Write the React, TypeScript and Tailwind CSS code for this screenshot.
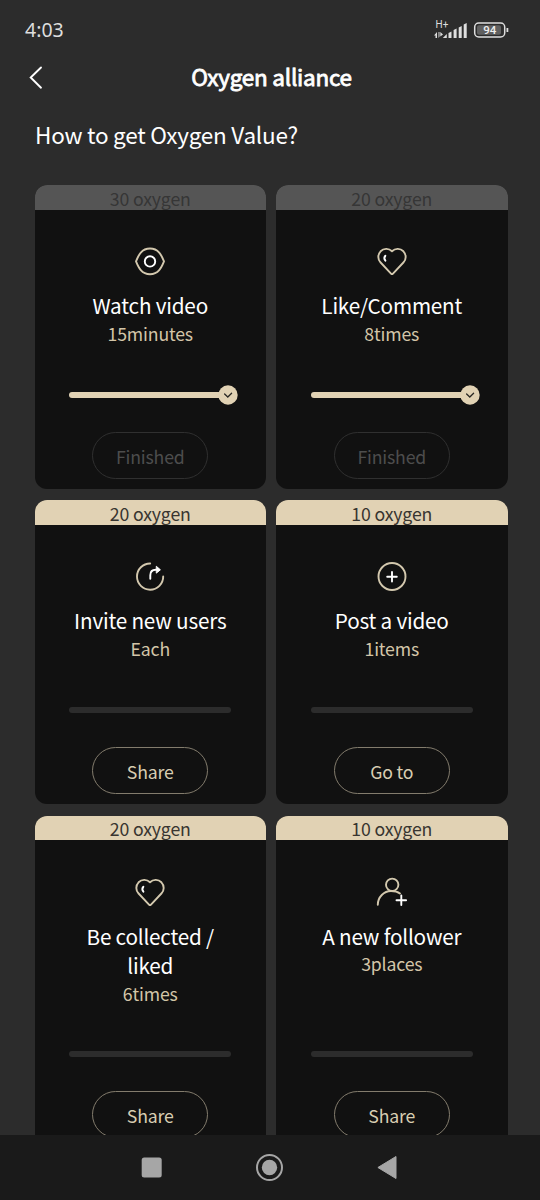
import type { ReactNode } from "react";

const GOLD = "#d3c8ae";

type IconName = "eye" | "heart" | "share" | "plus" | "user";

type Task = {
  reward: string;
  title: string;
  sub: string;
  icon: IconName;
  action: string;
  done?: boolean;
};

const rows: Task[][] = [
  [
    { reward: "30 oxygen", title: "Watch video", sub: "15minutes", icon: "eye", action: "Finished", done: true },
    { reward: "20 oxygen", title: "Like/Comment", sub: "8times", icon: "heart", action: "Finished", done: true },
  ],
  [
    { reward: "20 oxygen", title: "Invite new users", sub: "Each", icon: "share", action: "Share" },
    { reward: "10 oxygen", title: "Post a video", sub: "1items", icon: "plus", action: "Go to" },
  ],
  [
    { reward: "20 oxygen", title: "Be collected / liked", sub: "6times", icon: "heart", action: "Share" },
    { reward: "10 oxygen", title: "A new follower", sub: "3places", icon: "user", action: "Share" },
  ],
];

const glyphs: Record<IconName, ReactNode> = {
  eye: (
    <>
      <path d="M1 15.300C3.600 9 6.500 2.500 15 2.500S26.400 9 29 15.300C26.400 21.600 23.500 28.200 15 28.200S3.600 21.600 1 15.300Z" stroke={GOLD} />
      <circle cx="15" cy="15.400" r="5.200" stroke="#fff" />
    </>
  ),
  heart: (
    <>
      <path d="M15 5.200C11.500 1.900 6.600 2.400 3.600 5.300c-3.100 3.200-3 8.100 0 11.200L14 27.600q1 1 2 0L26.400 16.500c3-3.100 3.100-8 0-11.200C23.400 2.400 18.500 1.900 15 5.200Z" stroke={GOLD} />
      <path d="M8.400 9.700c-1.200 1.400-1.200 3.600 0 5" stroke="#fff" />
    </>
  ),
  share: (
    <>
      <path d="M15.200 2.500A13.100 13.100 0 1 0 28.200 15.500" stroke={GOLD} />
      <path d="M15.300 17.800v-3.500q0-5.500 5.500-5.500H23.500" stroke="#fff" />
      <path d="m21.600 5.500 3.800 3.300-3.800 3.100z" fill="#fff" stroke="#fff" strokeWidth="1" />
    </>
  ),
  plus: (
    <>
      <circle cx="15" cy="15.500" r="13.500" stroke={GOLD} />
      <path d="M15 11v9.500M10.200 15.700h9.600" stroke="#fff" />
    </>
  ),
  user: (
    <>
      <circle cx="15.200" cy="7.800" r="6.200" stroke={GOLD} />
      <path d="M.8 27.800C.8 20 7 14 14 14c3.500 0 6.800.8 9 2.500" stroke={GOLD} />
      <path d="M24.300 18.500v9.600M19.500 23.300h9.600" stroke="#fff" />
    </>
  ),
};

function TaskIcon({ name }: { name: IconName }) {
  return (
    <svg className="h-[30px] w-[30px] shrink-0 overflow-visible" viewBox="0 0 30 30" fill="none" strokeWidth="1.9" strokeLinecap="round" strokeLinejoin="round">
      {glyphs[name]}
    </svg>
  );
}

function TaskCard({ task }: { task: Task }) {
  return (
    <article className="flex min-w-0 flex-1 flex-col items-center overflow-hidden rounded-[12px] bg-[#111111] pb-[9.5px]">
      <div
        className={`flex h-[24.5px] w-full shrink-0 items-center justify-center text-[17.700px] leading-[24px] tracking-[-0.17px] ${
          task.done ? "bg-[#555555] text-[#363636]" : "bg-[#e1d2b4] text-[#383530]"
        }`}
      >
        <span className="pt-[0.5px]">{task.reward}</span>
      </div>
      <div className="flex grow flex-col items-center pt-[36.5px]">
        <TaskIcon name={task.icon} />
        <h2 className="mt-[15px] max-w-[162px] text-center text-[20.700px] leading-[29.5px] tracking-[-0.2px] text-white">{task.title}</h2>
        <p className="-mt-px pb-px text-[17.700px] leading-[26px] tracking-[-0.17px] text-[#d3c5a8]">{task.sub}</p>
      </div>
      <div className="relative mt-[44.2px] flex h-[6px] w-[162px] items-center">
        <div className={`h-full w-full rounded-full ${task.done ? "bg-[#e1d2b4]" : "bg-[#2c2c2c]"}`} />
        {task.done && (
          <svg className="absolute -right-[7px] h-[20px] w-[20px]" viewBox="0 0 20 20" fill="none">
            <circle cx="10" cy="10" r="9.700" fill="#e1d2b4" />
            <path d="m6.600 9 3.200 3 3.800-3.800" stroke="#2b2925" strokeWidth="1.300" strokeLinecap="round" />
          </svg>
        )}
      </div>
      <button
        className={`mt-[34.5px] h-[47px] w-[116px] shrink-0 rounded-full border pt-px text-[17.700px] tracking-[-0.17px] ${
          task.done ? "border-[#303030] text-[#4d4d4d]" : "border-[#837c6d] text-[#d8cdb2]"
        }`}
      >
        {task.action}
      </button>
    </article>
  );
}

function StatusBar() {
  return (
    <div className="flex h-[50px] shrink-0 items-center justify-between pr-[30px] pl-[25px] pt-[10px]">
      <span className="font-['Noto_Sans'] text-[19.500px] text-[#dedede]">4:03</span>
      <svg className="h-[24px] w-[76px]" viewBox="434 18 76 24" fill="none">
        <text x="435.500" y="28.300" fontSize="10" fill="#dedede" fontFamily="Roboto, sans-serif">H+</text>
        <path d="M434 35.500l3-3.500v6h-1.500v-2.500zM438.500 32v6l1-1.500v-4.500zM440.300 32l2.700 2.500-2.700 2z" fill="#dedede" />
        <path d="m442.800 38 4-4v4zM448.500 38v-5l3-1.500V38zM453.600 38v-8l3-1.500V38zM458.700 38V27.500l3-1.500v12zM463.700 38V24.500l3-1.500v15z" fill="#dedede" />
        <rect x="474.700" y="23" width="30" height="14" rx="4" stroke="#dedede" strokeWidth="1.500" />
        <rect x="477" y="25.200" width="24" height="9.600" rx="2" fill="#606060" />
        <path d="M506.500 28v4h1.800v-4z" fill="#dedede" />
        <text x="489.700" y="34.200" textAnchor="middle" fontSize="11.500" fontWeight="500" fill="#eeeeee" fontFamily="Roboto, sans-serif">94</text>
      </svg>
    </div>
  );
}

export default function App() {
  return (
    <div className="flex h-[1200px] w-[540px] flex-col overflow-hidden bg-[#2c2c2c] font-['Noto_Sans_CJK_SC',sans-serif]">
      <StatusBar />
      <header className="grid h-[56px] shrink-0 grid-cols-[60px_1fr_57px] items-center">
        <svg className="ml-[29px] h-[24px] w-[14px]" viewBox="0 0 14 24" fill="none">
          <path d="M12 1.500 1.700 11.500 12 21.700" stroke="#fff" strokeWidth="1.900" strokeLinecap="round" />
        </svg>
        <h1 className="pb-[2px] text-center text-[22.500px] font-normal tracking-[-0.24px] text-white [-webkit-text-stroke:0.8px_#ffffff]">Oxygen alliance</h1>
      </header>
      <p className="h-[79px] shrink-0 pl-[35px] pt-[11px] text-[22.500px] leading-[34px] tracking-[-0.25px] text-white">How to get Oxygen Value?</p>
      <main className="flex min-h-0 flex-1 flex-col gap-[11.8px] overflow-hidden pr-[32.5px] pl-[34.5px]">
        {rows.map((row, i) => (
          <div key={i} className="flex min-h-[303.500px] shrink-0 gap-[10px]">
            {row.map((task) => (
              <TaskCard key={task.title} task={task} />
            ))}
          </div>
        ))}
      </main>
      <nav className="flex h-[65px] shrink-0 justify-center bg-[#1a1a1a]">
        <svg className="h-[65px] w-[540px]" viewBox="0 1135 540 65">
          <rect x="141.700" y="1157.500" width="20" height="20" rx="2.500" fill="#a6a6a6" />
          <circle cx="269.500" cy="1167.500" r="12.500" fill="none" stroke="#a6a6a6" strokeWidth="2" />
          <circle cx="269.500" cy="1167.500" r="7.700" fill="#a6a6a6" />
          <path d="M377.900 1167.500 396 1156.500v22z" fill="#a6a6a6" stroke="#a6a6a6" strokeLinejoin="round" />
        </svg>
      </nav>
    </div>
  );
}
